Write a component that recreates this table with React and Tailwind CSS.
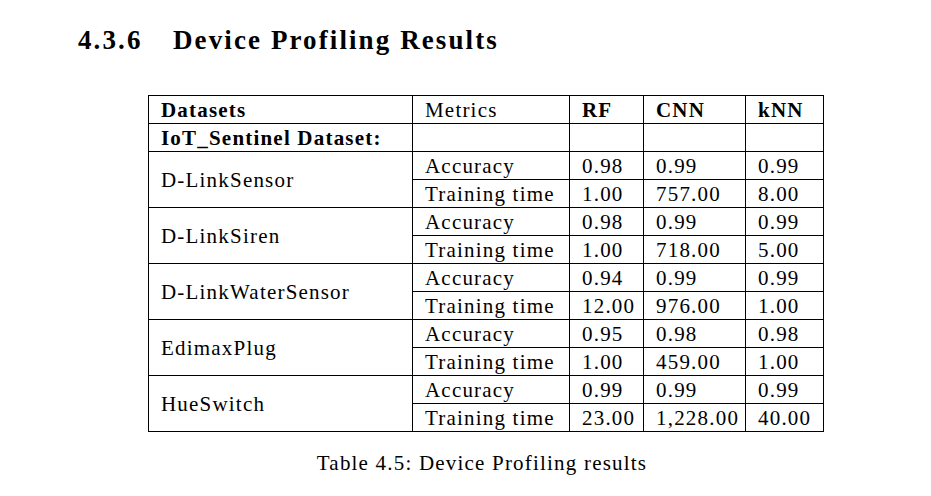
const groups = [
  { name: "D-LinkSensor", acc: ["0.98", "0.99", "0.99"], time: ["1.00", "757.00", "8.00"] },
  { name: "D-LinkSiren", acc: ["0.98", "0.99", "0.99"], time: ["1.00", "718.00", "5.00"] },
  { name: "D-LinkWaterSensor", acc: ["0.94", "0.99", "0.99"], time: ["12.00", "976.00", "1.00"] },
  { name: "EdimaxPlug", acc: ["0.95", "0.98", "0.98"], time: ["1.00", "459.00", "1.00"] },
  { name: "HueSwitch", acc: ["0.99", "0.99", "0.99"], time: ["23.00", "1,228.00", "40.00"] },
];

const cell = "border border-black h-[28px] p-0 pl-[12px] align-middle leading-[26px] whitespace-nowrap overflow-visible";

const App = () => {
  return (
    <div
      className="w-[931px] h-[496px] bg-white text-black overflow-hidden"
      style={{ fontFamily: '"Liberation Serif", "Times New Roman", serif' }}
    >
      <h2 className="pt-[23px] pl-[78px] text-[27px] font-bold leading-[34px] tracking-[2.1px] flex">
        <span className="w-[95px]">4.3.6</span>
        <span>Device Profiling Results</span>
      </h2>

      <div className="pl-[148px] pt-[38px]">
        <table className="table-fixed w-[675px] border-collapse text-[21px] tracking-[1.2px]">
          <colgroup>
            <col className="w-[264px]" />
            <col className="w-[157px]" />
            <col className="w-[74px]" />
            <col className="w-[102px]" />
            <col className="w-[78px]" />
          </colgroup>
          <tbody>
            <tr>
              <td className={`${cell} font-bold`}>Datasets</td>
              <td className={cell}>Metrics</td>
              <td className={`${cell} font-bold`}>RF</td>
              <td className={`${cell} font-bold`}>CNN</td>
              <td className={`${cell} font-bold`}>kNN</td>
            </tr>
            <tr>
              <td className={`${cell} font-bold`}>IoT_Sentinel Dataset:</td>
              <td className={cell}></td>
              <td className={cell}></td>
              <td className={cell}></td>
              <td className={cell}></td>
            </tr>
            {groups.map((g) => (
              <>
                <tr key={g.name + "-a"}>
                  <td rowSpan={2} className={cell}>
                    {g.name}
                  </td>
                  <td className={cell}>Accuracy</td>
                  {g.acc.map((v, i) => (
                    <td key={i} className={cell}>{v}</td>
                  ))}
                </tr>
                <tr key={g.name + "-t"}>
                  <td className={cell}>Training time</td>
                  {g.time.map((v, i) => (
                    <td key={i} className={cell}>{v}</td>
                  ))}
                </tr>
              </>
            ))}
          </tbody>
        </table>
      </div>

      <p className="text-[21px] tracking-[1.2px] leading-[26px] mt-[18px] text-center w-[964px]">
        Table 4.5: Device Profiling results
      </p>
    </div>
  );
};

export default App;
